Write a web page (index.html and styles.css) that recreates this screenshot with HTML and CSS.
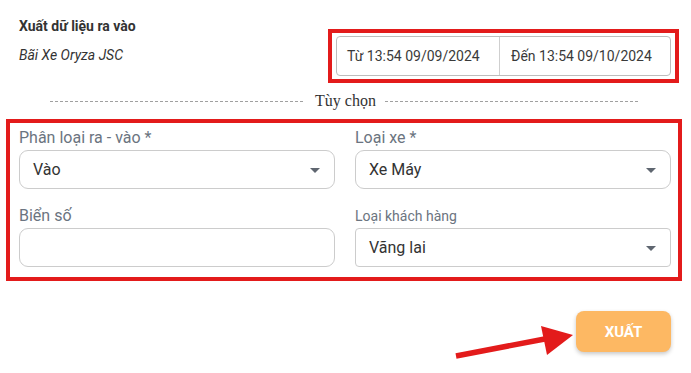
FILE: index.html
```html
<!DOCTYPE html>
<html lang="vi">
<head>
<meta charset="utf-8">
<title>Xuất dữ liệu ra vào</title>
<link rel="stylesheet" href="styles.css">
</head>
<body>
<div class="page">
  <div class="header">
    <div class="heading">
      <div class="title">Xuất dữ liệu ra vào</div>
      <div class="subtitle">Bãi Xe Oryza JSC</div>
    </div>
    <div class="range">
      <div class="range-part range-from">Từ 13:54 09/09/2024</div>
      <div class="range-part range-to">Đến 13:54 09/10/2024</div>
    </div>
  </div>

  <div class="divider">
    <span class="divider-line"></span>
    <span class="divider-text">Tùy chọn</span>
    <span class="divider-line"></span>
  </div>

  <div class="form">
    <div class="field">
      <label class="label">Phân loại ra - vào *</label>
      <div class="control select round">
        <span class="value">Vào</span>
        <span class="caret"></span>
      </div>
    </div>
    <div class="field">
      <label class="label">Loại xe *</label>
      <div class="control select round">
        <span class="value">Xe Máy</span>
        <span class="caret"></span>
      </div>
    </div>
    <div class="field">
      <label class="label">Biển số</label>
      <div class="control round"></div>
    </div>
    <div class="field">
      <label class="label label-sm">Loại khách hàng</label>
      <div class="control select square">
        <span class="value">Vãng lai</span>
        <span class="caret"></span>
      </div>
    </div>
  </div>

  <div class="actions">
    <button class="export-btn">XUẤT</button>
  </div>

  <div class="mark mark-range"></div>
  <div class="mark mark-form"></div>
  <svg class="arrow" width="691" height="373" viewBox="0 0 691 373">
    <line x1="456" y1="356" x2="550" y2="338" stroke="#e31b1b" stroke-width="5.5"/>
    <polygon points="541,326 573,335 547,355" fill="#e31b1b"/>
  </svg>
</div>
</body>
</html>
```

FILE: styles.css
```css
* { box-sizing: border-box; }

html, body {
  margin: 0;
  padding: 0;
  background: #ffffff;
}

body {
  font-family: Roboto, "Noto Sans", "Liberation Sans", sans-serif;
  color: #333333;
}

.page {
  position: relative;
  width: 691px;
  height: 373px;
  padding: 16px 20px 0 19px;
  overflow: hidden;
}

.header {
  display: flex;
  justify-content: space-between;
  align-items: flex-start;
}

.title {
  font-size: 14px;
  font-weight: 700;
  line-height: 20px;
  color: #333333;
}

.subtitle {
  margin-top: 9px;
  font-size: 14px;
  font-style: italic;
  line-height: 20px;
  color: #333333;
}

.range {
  margin-top: 20px;
  display: flex;
  width: 335px;
  height: 40px;
  border: 1px solid #bdbdbd;
  border-radius: 4px;
}

.range-part {
  display: flex;
  align-items: center;
  font-size: 14px;
  color: #3a3a3a;
}

.range-from {
  width: 163px;
  padding-left: 10px;
  border-right: 1px solid #cfcfcf;
}

.range-to {
  flex: 1;
  padding-left: 11px;
}

.divider {
  margin: 15px 31px 0 31px;
  height: 20px;
  display: flex;
  align-items: center;
}

.divider-line {
  flex: 1;
  height: 1px;
  background: repeating-linear-gradient(to right, #a0a0a0 0 3px, transparent 3px 5px);
}

.divider-text {
  padding: 0 9px 0 10px;
  font-family: "Liberation Serif", "DejaVu Serif", serif;
  font-size: 16px;
  line-height: 20px;
  color: #333333;
}

.form {
  margin-top: 18px;
  display: grid;
  grid-template-columns: 316px 316px;
  column-gap: 20px;
  row-gap: 18px;
}

.field {
  display: flex;
  flex-direction: column;
}

.label {
  font-size: 16px;
  line-height: 18px;
  color: #6b7480;
  margin-bottom: 3px;
}

.label-sm {
  font-size: 14px;
}

.control {
  height: 39px;
  border: 1px solid #cccccc;
  background: #ffffff;
  display: flex;
  align-items: center;
}

.round { border-radius: 9px; }
.square { border-radius: 4px; }

.select {
  padding: 0 14px 0 13px;
  justify-content: space-between;
}

.value {
  font-size: 16px;
  color: #333333;
}

.caret {
  width: 0;
  height: 0;
  border-left: 5px solid transparent;
  border-right: 5px solid transparent;
  border-top: 5px solid #5f6670;
  margin-top: 1px;
}

.actions {
  margin-top: 44px;
  display: flex;
  justify-content: flex-end;
}

.export-btn {
  width: 95px;
  height: 41px;
  border: none;
  border-radius: 8px;
  background: #fdb863;
  color: #ffffff;
  font-family: Roboto, "Liberation Sans", sans-serif;
  font-size: 15px;
  font-weight: 700;
  box-shadow: 0 2px 4px rgba(0, 0, 0, 0.22);
  padding: 0;
}

.mark {
  position: absolute;
  border: 4px solid #e31b1b;
  pointer-events: none;
}

.mark-range {
  left: 328px;
  top: 29px;
  width: 351px;
  height: 54px;
}

.mark-form {
  left: 6px;
  top: 119px;
  width: 676px;
  height: 162px;
}

.arrow {
  position: absolute;
  left: 0;
  top: 0;
  pointer-events: none;
}
```
